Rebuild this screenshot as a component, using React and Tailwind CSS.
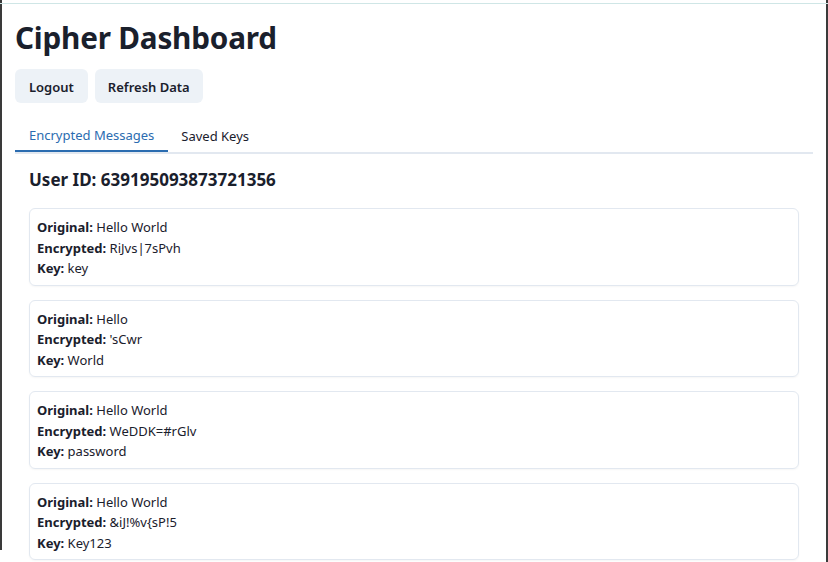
import React from "react";

const messages = [
  { original: "Hello World", encrypted: "RiJvs|7sPvh", key: "key" },
  { original: "Hello", encrypted: "'sCwr", key: "World" },
  { original: "Hello World", encrypted: "WeDDK=#rGlv", key: "password" },
  { original: "Hello World", encrypted: "&iJ!%v{sP!5", key: "Key123" },
];

export default function App() {
  return (
    <div
      className="w-[828px] h-[562px] overflow-hidden bg-white text-[#1a202c] relative"
      style={{ fontFamily: '"Noto Sans", "Open Sans", sans-serif' }}
    >
      <div className="absolute left-0 top-0 h-[550px] w-[2px] bg-[#3a3a3a]" />
      <div className="absolute right-0 top-0 h-full w-[2px] bg-[#3a3a3a]" />
      <div className="absolute left-0 right-0 top-[3px] h-[1px] bg-[#cfe6e6]" />
      <div className="px-[15px] pt-[18px]">
        <h1 className="text-[29.7px] font-bold leading-[40px] tracking-[-0.2px]">Cipher Dashboard</h1>
        <div className="flex gap-[7px] mt-[11px]">
          <button className="h-[34px] pt-[3px] px-[14px] rounded-[6px] bg-[#edf2f7] text-[13px] font-semibold">Logout</button>
          <button className="h-[34px] pt-[3px] px-[13px] rounded-[6px] bg-[#edf2f7] text-[13px] font-semibold">Refresh Data</button>
        </div>
        <div className="mt-[15px] flex border-b-2 border-[#e2e8f0]">
          <div className="px-[14px] h-[34px] pt-[3px] flex items-center text-[13px] text-[#2b6cb0] border-b-2 border-[#2b6cb0] -mb-[2px]">
            Encrypted Messages
          </div>
          <div className="px-[13px] h-[34px] pt-[3px] flex items-center text-[13px]">Saved Keys</div>
        </div>
        <div className="px-[14px] pt-[14px]">
          <h2 className="text-[17px] font-bold leading-[24px]">User ID: 639195093873721356</h2>
          <div className="mt-[16px] flex flex-col gap-[14px]">
            {messages.map((m, i) => (
              <div key={i} className="border border-[#e2e8f0] rounded-[6px] px-[7px] pt-[8px] pb-[6px] text-[13px] leading-[20.5px] shadow-[0_1px_2px_rgba(0,0,0,0.04)]">
                <div><span className="font-bold">Original:</span> {m.original}</div>
                <div><span className="font-bold">Encrypted:</span> {m.encrypted}</div>
                <div><span className="font-bold">Key:</span> {m.key}</div>
              </div>
            ))}
          </div>
        </div>
      </div>
    </div>
  );
}
